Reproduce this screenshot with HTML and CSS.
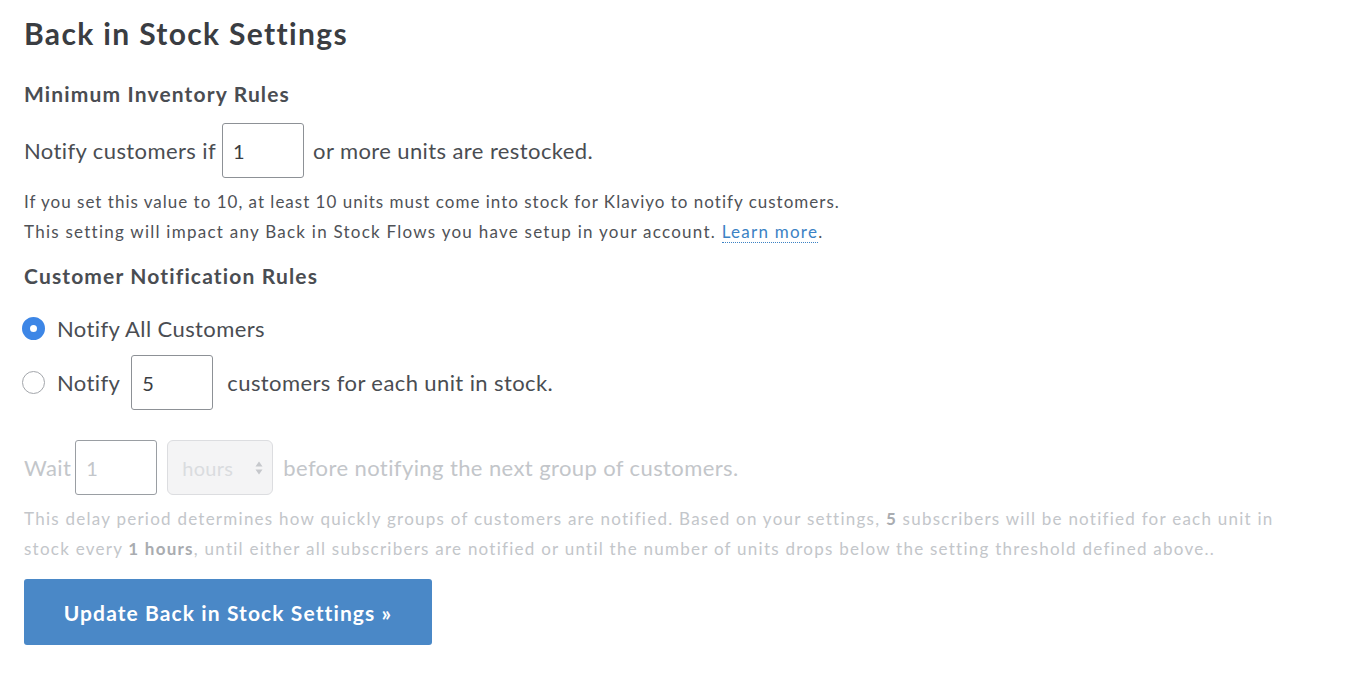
FILE: index.html
```html
<!DOCTYPE html>
<html>
<head>
<meta charset="utf-8">
<link rel="stylesheet" href="styles.css">
</head>
<body>
<div class="page">
  <h1 class="title">Back in Stock Settings</h1>
  <h2 class="section">Minimum Inventory Rules</h2>
  <div class="row row-min">
    <span>Notify customers if</span>
    <input class="num" type="text" value="1">
    <span>or more units are restocked.</span>
  </div>
  <p class="help">If you set this value to 10, at least 10 units must come into stock for Klaviyo to notify customers.<br><span class="help-wide">This setting will impact any Back in Stock Flows you have setup in your account. <a class="link" href="#">Learn more</a>.</span></p>
  <h2 class="section section-2">Customer Notification Rules</h2>
  <div class="row radio-row radio-all">
    <span class="radio checked"></span>
    <span>Notify All Customers</span>
  </div>
  <div class="row radio-row radio-some">
    <span class="radio"></span>
    <span>Notify</span>
    <input class="num num-5" type="text" value="5">
    <span>customers for each unit in stock.</span>
  </div>
  <div class="row wait-row">
    <span class="wait-label">Wait</span>
    <input class="num num-wait" type="text" value="1">
    <span class="select">hours<span class="arrows"><svg width="8" height="16" viewBox="0 0 8 16"><path d="M4 1.5 L7.5 6.5 H0.5 Z M4 14.5 L7.5 9.5 H0.5 Z" fill="#c6c8cc"/></svg></span></span>
    <span>before notifying the next group of customers.</span>
  </div>
  <p class="help help-dim">This delay period determines how quickly groups of customers are notified. Based on your settings, <b>5</b> subscribers will be notified for each unit in<br>stock every <b>1 hours</b>, until either all subscribers are notified or until the number of units drops below the setting threshold defined above..</p>
  <button class="btn" type="button">Update Back in Stock Settings »</button>
</div>
</body>
</html>
```
FILE: styles.css
```css
html, body {
  margin: 0;
  padding: 0;
  background: #ffffff;
}
body {
  font-family: "Lato", "Open Sans", sans-serif;
  color: #45484d;
}
.page {
  padding: 13px 24px 0 24px;
}
.title {
  margin: 0;
  font-size: 30px;
  line-height: 40px;
  font-weight: 700;
  color: #3a3d42;
  letter-spacing: 1.35px;
}
.section {
  margin: 28px 0 0 0;
  font-size: 21px;
  line-height: 26px;
  font-weight: 700;
  color: #4a4d52;
  letter-spacing: 1.15px;
}
.row {
  display: flex;
  align-items: center;
  font-size: 22px;
  color: #4a4d52;
  letter-spacing: 0.4px;
}
.row-min {
  margin-top: 16px;
  height: 55px;
  gap: 6px;
}
.row-min .num {
  margin-right: 3px;
}
.num {
  box-sizing: border-box;
  width: 82px;
  height: 55px;
  border: 1.5px solid #8d9196;
  border-radius: 3px;
  padding: 0 10px;
  font-family: "Lato", sans-serif;
  font-size: 20px;
  color: #3a3d42;
  background: #fff;
  outline: none;
}
.help {
  margin: 9px 0 0 0;
  font-size: 17px;
  line-height: 30px;
  color: #4f5257;
  letter-spacing: 1px;
}
.help-wide {
  letter-spacing: 1.25px;
}
.link {
  color: #3b82c4;
  text-decoration: none;
  border-bottom: 1.5px dotted #3b82c4;
}
.section-2 {
  margin-top: 16px;
}
.radio-row {
  gap: 12px;
}
.radio-all {
  margin-top: 26px;
  height: 26px;
}
.radio-some {
  margin-top: 14px;
  height: 55px;
}
.radio-some .num-5 {
  margin-left: -1px;
  margin-right: 2px;
}
.radio {
  box-sizing: border-box;
  width: 23px;
  height: 23px;
  border-radius: 50%;
  border: 1.5px solid #a3a6ab;
  margin-left: -2px;
  background: #fff;
  flex: none;
}
.radio.checked {
  border: 8px solid #3d86e6;
  background: #fff;
}
.wait-row {
  margin-top: 30px;
  height: 55px;
  color: #c3c6ca;
  gap: 8px;
}
.wait-label {
  margin-right: -4px;
}
.num-wait {
  border-color: #9a9ea3;
  color: #c3c6ca;
  margin-right: 2px;
}
.select {
  box-sizing: border-box;
  width: 106px;
  height: 55px;
  border: 1.5px solid #dcdde0;
  border-radius: 6px;
  background: #f4f4f5;
  display: flex;
  align-items: center;
  justify-content: space-between;
  padding: 0 9px 0 14px;
  font-size: 20px;
  letter-spacing: 0.3px;
  color: #dadcdf;
  margin-right: 2px;
}
.arrows {
  display: flex;
}
.help-dim {
  margin-top: 9px;
  color: #c3c6ca;
  letter-spacing: 1.25px;
}
.help-dim b {
  color: #a9acb0;
}
.btn {
  margin-top: 15px;
  width: 408px;
  height: 66px;
  border: none;
  border-radius: 3px;
  background: #4a88c7;
  color: #ffffff;
  font-family: "Lato", sans-serif;
  font-size: 21px;
  font-weight: 700;
  letter-spacing: 1.1px;
  padding: 0;
}
```
